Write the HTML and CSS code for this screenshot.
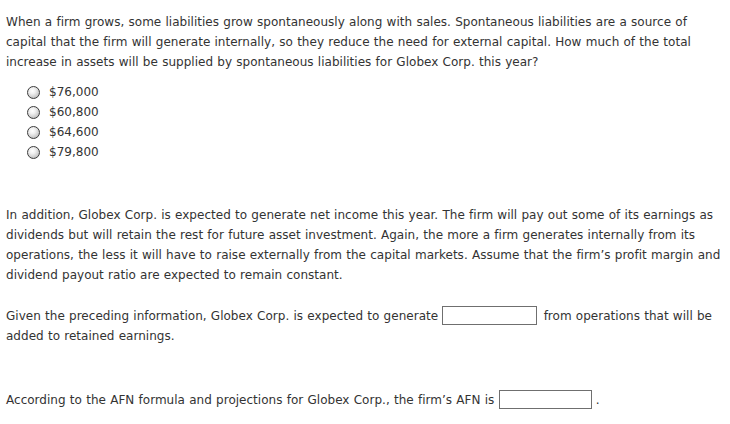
FILE: index.html
```html
<!DOCTYPE html>
<html>
<head>
<meta charset="utf-8">
<link rel="stylesheet" href="styles.css">
</head>
<body>
<div class="page">
  <p class="para">When a firm grows, some liabilities grow spontaneously along with sales. Spontaneous liabilities are a source of capital that the firm will generate internally, so they reduce the need for external capital. How much of the total increase in assets will be supplied by spontaneous liabilities for Globex Corp. this year?</p>
  <ul class="options">
    <li class="option"><span class="radio"></span><span>$76,000</span></li>
    <li class="option"><span class="radio"></span><span>$60,800</span></li>
    <li class="option"><span class="radio"></span><span>$64,600</span></li>
    <li class="option"><span class="radio"></span><span>$79,800</span></li>
  </ul>
  <p class="para after-options">In addition, Globex Corp. is expected to generate net income this year. The firm will pay out some of its earnings as dividends but will retain the rest for future asset investment. Again, the more a firm generates internally from its operations, the less it will have to raise externally from the capital markets. Assume that the firm’s profit margin and dividend payout ratio are expected to remain constant.</p>
  <p class="para next">Given the preceding information, Globex Corp. is expected to generate <span class="blank"></span> from operations that will be added to retained earnings.</p>
  <p class="para section">According to the AFN formula and projections for Globex Corp., the firm’s AFN is <span class="blank narrow"></span> .</p>
</div>
</body>
</html>
```

FILE: styles.css
```css
html, body {
  margin: 0;
  padding: 0;
  background: #ffffff;
}

.page {
  padding: 12px 6px 0 6px;
  font-family: Verdana, "DejaVu Sans", sans-serif;
  font-size: 12px;
  letter-spacing: 0.02px;
  word-spacing: 0.4px;
  line-height: 20px;
  color: #333333;
}

.para {
  margin: 0;
}

.after-options {
  margin-top: 43px;
}

.section {
  margin-top: 44px;
}

.next {
  margin-top: 21px;
}

.options {
  list-style: none;
  margin: 10px 0 0 0;
  padding: 0 0 0 21px;
}

.option {
  display: flex;
  align-items: center;
  height: 20px;
}

.radio {
  width: 11px;
  height: 11px;
  border: 1px solid #3c3c3c;
  border-radius: 50%;
  background: radial-gradient(circle at 40% 35%, #ffffff 0%, #f0f0f0 30%, #c4c4c4 75%, #9a9a9a 100%);
  margin-right: 9px;
  flex: none;
}

.blank {
  display: inline-block;
  width: 93px;
  height: 17px;
  border: 1px solid #6f6f6f;
  vertical-align: middle;
  margin-top: -3px;
  margin-right: 2px;
  box-sizing: content-box;
}

.narrow {
  width: 91px;
  margin-right: 0;
}
```
